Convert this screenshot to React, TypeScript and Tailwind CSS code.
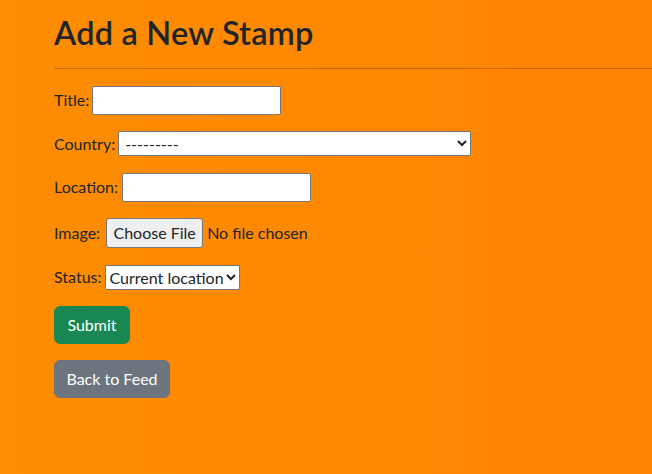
import React from 'react'

export default function App() {
  return (
    <div className="min-h-[474px] w-full overflow-hidden bg-gradient-to-r from-[#fd8d02] to-[#fe8302] font-['Lato','Liberation_Sans',sans-serif] text-[16px] leading-[24px] text-[#212529]">
      <div className="pl-[54px] pt-[14px]">
        <h1 className="h-[38px] text-[32.5px] leading-[38px] font-semibold tracking-[0.2px]">Add a New Stamp</h1>
        <hr className="mt-4 mb-4 border-t border-[#212529]/25" />
        <form className="flex flex-col gap-4">
          <div className="flex h-[30px] items-center gap-[3px]">
            <label>Title:</label>
            <input type="text" className="h-[29px] w-[189px] rounded-[2px] border border-[#767676] bg-white px-[2px]" />
          </div>
          <div className="flex h-[25px] items-center gap-[3px]">
            <label>Country:</label>
            <select className="h-[25px] w-[353px] rounded-[2px] border border-[#767676] bg-white pl-[2px] text-[16px]">
              <option>---------</option>
            </select>
          </div>
          <div className="flex h-[30px] items-center gap-[4px]">
            <label>Location:</label>
            <input type="text" className="h-[29px] w-[189px] rounded-[2px] border border-[#767676] bg-white px-[2px]" />
          </div>
          <div className="flex h-[30px] items-center gap-[4px]">
            <label className="mr-[2px]">Image:</label>
            <button type="button" className="h-[30px] w-[97px] rounded-[3px] border border-[#767676] bg-[#efefef]">
              Choose File
            </button>
            <span>No file chosen</span>
          </div>
          <div className="flex h-[26px] items-center gap-[3px]">
            <label>Status:</label>
            <select className="h-[25px] w-[135px] rounded-[2px] border border-[#767676] bg-white text-[16px]">
              <option>Current location</option>
              <option>Previous location</option>
            </select>
          </div>
          <div>
            <button type="submit" className="w-[76px] rounded-[6px] border border-[#198754] bg-[#198754] py-[6px] text-white">
              Submit
            </button>
          </div>
          <div>
            <button type="button" className="w-[116px] rounded-[6px] border border-[#6c757d] bg-[#6c757d] py-[6px] text-white">
              Back to Feed
            </button>
          </div>
        </form>
      </div>
    </div>
  )
}
